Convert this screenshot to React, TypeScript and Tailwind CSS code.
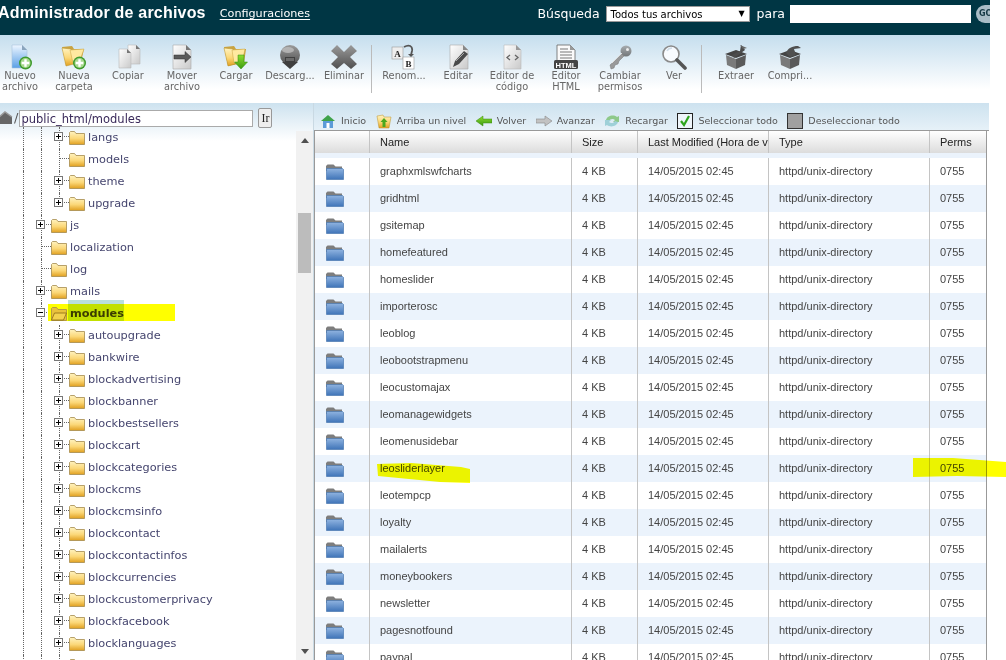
import React from "react";

const dv = "font-['DejaVu_Sans',sans-serif]";
const ar = "font-['Liberation_Sans',Arial,sans-serif]";

function Defs() {
  return (
    <svg width="0" height="0" className="absolute">
      <defs>
        <linearGradient id="fy" x1="0" y1="0" x2="0" y2="1">
          <stop offset="0" stopColor="#fff3c0" />
          <stop offset="0.55" stopColor="#fbd777" />
          <stop offset="1" stopColor="#e0a020" />
        </linearGradient>
        <linearGradient id="fb" x1="0" y1="0" x2="0" y2="1">
          <stop offset="0" stopColor="#8fb3e0" />
          <stop offset="1" stopColor="#3f74b8" />
        </linearGradient>
        <linearGradient id="doc" x1="0" y1="0" x2="1" y2="1">
          <stop offset="0" stopColor="#ffffff" />
          <stop offset="1" stopColor="#c9c9c9" />
        </linearGradient>
        <linearGradient id="docb" x1="0" y1="0" x2="0" y2="1">
          <stop offset="0" stopColor="#eef6ff" />
          <stop offset="1" stopColor="#5aa0e6" />
        </linearGradient>
        <linearGradient id="gr" x1="0" y1="0" x2="0" y2="1">
          <stop offset="0" stopColor="#9a9a9a" />
          <stop offset="1" stopColor="#4f4f4f" />
        </linearGradient>
        <linearGradient id="grn" x1="0" y1="0" x2="0" y2="1">
          <stop offset="0" stopColor="#8fdc30" />
          <stop offset="1" stopColor="#3a9a10" />
        </linearGradient>
      </defs>
    </svg>
  );
}

const Plus = () => (
  <g>
    <circle cx="18.5" cy="19" r="6.5" fill="#3f9a2c" />
    <circle cx="18.5" cy="19" r="5" fill="#a6d98e" />
    <path d="M18.5 15.2v7.6M14.7 19h7.6" stroke="#fff" strokeWidth="2.4" />
  </g>
);

const I = ({ children }: { children: React.ReactNode }) => (
  <svg width="26" height="26" viewBox="0 0 26 26" className="shrink-0">
    {children}
  </svg>
);

const icons: Record<string, React.ReactNode> = {
  newfile: (
    <I>
      <path d="M5 1h10l5 5v18H5z" fill="url(#docb)" stroke="#a9c4dd" strokeWidth="0.6" />
      <path d="M15 1l5 5h-5z" fill="#8aa4bc" />
      <Plus />
    </I>
  ),
  newfolder: (
    <I>
      <path d="M1 3l10-1 2 3 10 0-3 13-15 3z" fill="#c9a340" />
      <path d="M1 4l9 1 3 15-8 2z" fill="url(#fy)" stroke="#b8902c" strokeWidth="0.5" />
      <path d="M9 6l14-1-5 14H12z" fill="#ffe9a0" stroke="#c9a340" strokeWidth="0.5" />
      <Plus />
    </I>
  ),
  copy: (
    <I>
      <path d="M13 1h8l4 4v15H13z" fill="url(#doc)" stroke="#bbb" strokeWidth="0.6" />
      <path d="M21 1l4 4h-4z" fill="#777" />
      <path d="M4 5h8l4 4v15H4z" fill="url(#doc)" stroke="#bbb" strokeWidth="0.6" />
      <path d="M12 5l4 4h-4z" fill="#777" />
    </I>
  ),
  move: (
    <I>
      <path d="M4 1h13l5 5v19H4z" fill="url(#doc)" stroke="#aaa" strokeWidth="0.6" />
      <path d="M17 1l5 5h-5z" fill="#777" />
      <path d="M5 11h11V7.5l6 5.5-6 5.500V15H5z" fill="#5a5a5a" stroke="#333" strokeWidth="0.5" />
    </I>
  ),
  upload: (
    <I>
      <path d="M1 3l10-1 2 3 10 0-2 14-16 3z" fill="#c9a340" />
      <path d="M1 4l9 1 2 15-7 2z" fill="url(#fy)" stroke="#b8902c" strokeWidth="0.5" />
      <path d="M9 6l13-1-3 14H11z" fill="#ffe9a0" stroke="#c9a340" strokeWidth="0.5" />
      <path d="M15 11h6v7h3.500L18 25l-6.500-7H15z" fill="url(#grn)" stroke="#2f8a10" strokeWidth="0.5" />
    </I>
  ),
  download: (
    <I>
      <circle cx="13" cy="11" r="10" fill="url(#gr)" />
      <ellipse cx="11" cy="6" rx="6" ry="3" fill="#c4c4c4" opacity="0.7" />
      <path d="M8 13h10v5h3l-8 7-8-7h3z" fill="#3f3f3f" />
      <path d="M9 14h8v3H9z" fill="#6a6a6a" />
    </I>
  ),
  del: (
    <I>
      <path d="M6 1l7 7 7-7 6 6-7 6 7 7-6 5-7-6-7 6-6-5 7-7-7-6z" fill="url(#gr)" />
    </I>
  ),
  rename: (
    <I>
      <rect x="1" y="3" width="11" height="12" fill="#eee" stroke="#999" strokeWidth="0.6" />
      <text x="6.500" y="12.500" textAnchor="middle" fontSize="9" fontWeight="700" fontFamily="'Liberation Serif',serif" fill="#222">A</text>
      <rect x="12" y="13" width="11" height="12" fill="#fff" stroke="#999" strokeWidth="0.6" />
      <text x="17.500" y="22.500" textAnchor="middle" fontSize="9" fontWeight="700" fontFamily="'Liberation Serif',serif" fill="#222">B</text>
      <path d="M13 3c5-3 9-1 8 4l-1 4" fill="none" stroke="#555" strokeWidth="1.800" />
      <path d="M17 10l3 3 3-3z" fill="#555" />
    </I>
  ),
  edit: (
    <I>
      <path d="M5 1h13l5 5v19H5z" fill="url(#doc)" stroke="#aaa" strokeWidth="0.6" />
      <path d="M18 1l5 5h-5z" fill="#888" />
      <path d="M8 23l2-6L19 7l4 3-9 10z" fill="#4a4a4a" />
      <path d="M11 17l8-8" stroke="#aaa" strokeWidth="1" />
    </I>
  ),
  code: (
    <I>
      <path d="M5 1h12l5 5v19H5z" fill="url(#doc)" stroke="#bbb" strokeWidth="0.6" />
      <path d="M17 1l5 5h-5z" fill="#999" />
      <path d="M11 11l-3 2.500 3 2.500M16 11l3 2.500-3 2.500" fill="none" stroke="#666" strokeWidth="1.300" />
    </I>
  ),
  html: (
    <I>
      <path d="M4 1h13l5 5v13H4z" fill="#fafafa" stroke="#666" strokeWidth="0.8" />
      <path d="M17 1l5 5h-5z" fill="#999" />
      <path d="M7 5h8M7 8h12M7 11h12M7 14h12" stroke="#777" strokeWidth="1" />
      <rect x="1" y="16" width="24" height="9" rx="1.500" fill="#444" />
      <text x="13" y="23.500" textAnchor="middle" fontSize="7.500" fontWeight="700" fontFamily="'Liberation Sans',sans-serif" fill="#fff">HTML</text>
    </I>
  ),
  key: (
    <I>
      <circle cx="19" cy="7" r="5.500" fill="url(#gr)" opacity="0.75" />
      <circle cx="20.500" cy="5.500" r="1.500" fill="#eee" />
      <path d="M15 10L3 21l1 4 3-1 1-3 3-1 1-3 5-5z" fill="#999" stroke="#777" strokeWidth="0.5" />
      <path d="M15 9L5 19" stroke="#ddd" strokeWidth="1" />
    </I>
  ),
  view: (
    <I>
      <circle cx="10" cy="10" r="8" fill="#f8fbff" stroke="#8a8a8a" strokeWidth="1.600" />
      <path d="M6 7c1-2 3-3 5-3" stroke="#cfdde8" strokeWidth="1.500" fill="none" />
      <path d="M16 16l8 8" stroke="#555" strokeWidth="3.600" strokeLinecap="round" />
    </I>
  ),
  extract: (
    <I>
      <path d="M2 10l11-4 11 4-11 4z" fill="#444" />
      <path d="M3 11l10 4v10L4 21z" fill="#7a7a7a" />
      <path d="M23 11l-10 4v10l9-4z" fill="#5a5a5a" />
      <path d="M9 11l2 3 11-8-2-3-2-2-1 6z" fill="#4c4c4c" />
      <path d="M17 1l7 3-4 1z" fill="#666" />
    </I>
  ),
  compress: (
    <I>
      <path d="M2 10l11-4 11 4-11 4z" fill="#444" />
      <path d="M3 11l10 4v10L4 21z" fill="#7a7a7a" />
      <path d="M23 11l-10 4v10l9-4z" fill="#5a5a5a" />
      <path d="M9 9c2-5 6-7 12-7l3 2-7 1 2 6-6 2z" fill="#505050" />
    </I>
  ),
};

const ToolItem = ({ icon, label }: { icon: string; label: string[] }) => (
  <div className="flex w-[54px] shrink-0 flex-col items-center">
    {icons[icon]}
    <div className={`text-center text-[9.800px] leading-[11px] whitespace-nowrap text-[#666] ${dv}`}>
      {label.map((l) => (
        <div key={l}>{l}</div>
      ))}
    </div>
  </div>
);

const Sep = () => <div className="mt-[1px] h-[48px] w-px shrink-0 bg-[#bbb]" />;

const Folder = ({ open }: { open?: boolean }) => (
  <svg width="16" height="14" viewBox="0 0 16 14" className="shrink-0">
    <path d="M.5 3V1.500L1.500.5h4l1.500 2h8.500v11H.5z" fill={open ? "#e9c23c" : "url(#fy)"} stroke="#a58a4c" strokeWidth="0.8" />
    {open && <path d="M.5 13l3-7h12l-3 7z" fill="#f3d24e" stroke="#8a6a10" strokeWidth="0.8" />}
  </svg>
);

const Expander = ({ minus }: { minus?: boolean }) => (
  <span className="absolute left-[-5px] top-[5px] flex h-[9px] w-[9px] items-center justify-center border border-[#777] bg-white">
    <svg width="7" height="7" viewBox="0 0 7 7">
      <path d={minus ? "M1 3.500h5" : "M1 3.500h5M3.500 1v5"} stroke="#000" strokeWidth="1" />
    </svg>
  </span>
);

const Guide = () => <div className="h-full w-[18px] shrink-0 border-l border-dotted border-[#666]" />;

type TreeRow = { name: string; level: 1 | 2; plus?: boolean; open?: boolean; last?: boolean };

const TreeLine = ({ name, level, plus, open, last }: TreeRow) => (
  <div className="flex h-[22px] shrink-0 pl-[23px]">
    <Guide />
    {level === 2 && <Guide />}
    <div className="relative h-full w-[10px] shrink-0">
      <div className={`absolute left-0 top-0 border-l border-dotted border-[#666] ${last ? "h-[10px]" : "h-full"}`} />
      <div className="absolute left-0 top-[9px] w-[10px] border-t border-dotted border-[#666]" />
      {(plus || open) && <Expander minus={open} />}
    </div>
    <div className="relative flex items-center">
      {open && (
        <>
          <div className="absolute left-[-3px] top-[1px] h-[17px] w-[127px] bg-[#ffff00]" />
          <div className="absolute left-[17px] top-[-3px] h-[4px] w-[56px] bg-[#b9dfdd]" />
          <div className="absolute left-[17px] top-[1px] h-[17px] w-[56px] bg-[#c2e000]" />
        </>
      )}
      <span className="relative">
        <Folder open={open} />
      </span>
      {name && (
        <span className={`relative ml-[3px] text-[11.300px] ${open ? "font-bold text-[#3b3b00]" : "text-[#45456e]"} ${dv}`}>{name}</span>
      )}
    </div>
  </div>
);

const tree: TreeRow[] = [
  { name: "langs", level: 2, plus: true },
  { name: "models", level: 2 },
  { name: "theme", level: 2, plus: true },
  { name: "upgrade", level: 2, plus: true, last: true },
  { name: "js", level: 1, plus: true },
  { name: "localization", level: 1 },
  { name: "log", level: 1 },
  { name: "mails", level: 1, plus: true },
  { name: "modules", level: 1, open: true },
  ...[
    "autoupgrade",
    "bankwire",
    "blockadvertising",
    "blockbanner",
    "blockbestsellers",
    "blockcart",
    "blockcategories",
    "blockcms",
    "blockcmsinfo",
    "blockcontact",
    "blockcontactinfos",
    "blockcurrencies",
    "blockcustomerprivacy",
    "blockfacebook",
    "blocklanguages",
    "",
  ].map((name) => ({ name, level: 2 as const, plus: true })),
];

const files = [
  "graphxmlswfcharts",
  "gridhtml",
  "gsitemap",
  "homefeatured",
  "homeslider",
  "importerosc",
  "leoblog",
  "leobootstrapmenu",
  "leocustomajax",
  "leomanagewidgets",
  "leomenusidebar",
  "leosliderlayer",
  "leotempcp",
  "loyalty",
  "mailalerts",
  "moneybookers",
  "newsletter",
  "pagesnotfound",
  "paypal",
];

const BlueFolder = () => (
  <svg width="18" height="16" viewBox="0 0 18 16">
    <path d="M0 2L1.500.5h6l2 2h6.500V7H0z" fill="#7d7d7d" />
    <path d="M.5 4.500h16l1 1V15.500H.5z" fill="url(#fb)" stroke="#4a78b0" strokeWidth="0.7" />
  </svg>
);

const colW = ["w-[55px]", "w-[202px]", "w-[66px]", "w-[131px]", "w-[161px]", "w-[57px]"];

const Cell = ({ w, children, className = "" }: { w: string; children?: React.ReactNode; className?: string }) => (
  <div className={`${w} flex h-full shrink-0 items-center overflow-hidden whitespace-nowrap border-r border-[#c4c4c4] pl-[10px] ${className}`}>
    {children}
  </div>
);

const NavItem = ({ icon, label }: { icon: React.ReactNode; label: string }) => (
  <div className="flex items-center gap-[5px]">
    {icon}
    <span className={`text-[9.500px] whitespace-nowrap text-[#555] ${dv}`}>{label}</span>
  </div>
);

const N = ({ children }: { children: React.ReactNode }) => (
  <svg width="16" height="16" viewBox="0 0 16 16" className="shrink-0">
    {children}
  </svg>
);

export default function App() {
  return (
    <div className="relative h-[660px] w-[1006px] overflow-hidden bg-white">
      <Defs />
      {/* header */}
      <div className="flex h-[35px] w-[990px] items-start bg-[#003644] text-white">
        <div className={`ml-[-2px] mt-[1px] text-[16px] font-bold tracking-[0.2px] whitespace-nowrap ${ar}`}>Administrador de archivos</div>
        <div className={`ml-[14px] mt-[6px] text-[11.200px] underline underline-offset-2 ${dv}`}>Configuraciones</div>
        <div className="ml-auto mt-[5px] flex items-center">
          <span className={`text-[12.500px] ${dv}`}>Búsqueda</span>
          <div className={`ml-[6px] flex h-[16px] w-[144px] items-center justify-between border border-[#999] bg-white px-[4px] text-[10px] text-black ${dv}`}>
            <span>Todos tus archivos</span>
            <span className="text-[8px]">▼</span>
          </div>
          <span className={`ml-[7px] text-[12.500px] ${dv}`}>para</span>
          <div className="ml-[5px] h-[18px] w-[181px] bg-white" />
          <div className={`ml-[5px] flex h-[18px] w-[14px] items-center overflow-hidden rounded-l-full bg-[#a9bcc6] pl-[3px] text-[8px] font-bold text-[#143844] ${dv}`}>GO</div>
        </div>
      </div>

      {/* toolbar */}
      <div className="flex h-[68px] w-[990px] bg-[linear-gradient(#c5deee,#ffffff_80%)] pt-[9px]">
        <div className="ml-[-7px] flex">
          <ToolItem icon="newfile" label={["Nuevo", "archivo"]} />
          <ToolItem icon="newfolder" label={["Nueva", "carpeta"]} />
          <ToolItem icon="copy" label={["Copiar"]} />
          <ToolItem icon="move" label={["Mover", "archivo"]} />
          <ToolItem icon="upload" label={["Cargar"]} />
          <ToolItem icon="download" label={["Descarg..."]} />
          <ToolItem icon="del" label={["Eliminar"]} />
        </div>
        <Sep />
        <div className="ml-[5px] flex">
          <ToolItem icon="rename" label={["Renom..."]} />
          <ToolItem icon="edit" label={["Editar"]} />
          <ToolItem icon="code" label={["Editor de", "código"]} />
          <ToolItem icon="html" label={["Editor", "HTML"]} />
          <ToolItem icon="key" label={["Cambiar", "permisos"]} />
          <ToolItem icon="view" label={["Ver"]} />
        </div>
        <Sep />
        <div className="ml-[7px] flex">
          <ToolItem icon="extract" label={["Extraer"]} />
          <ToolItem icon="compress" label={["Compri..."]} />
        </div>
      </div>

      {/* body */}
      <div className="flex h-[557px] w-[1006px]">
        {/* left panel */}
        <div className="flex h-full w-[314px] shrink-0 flex-col border-r border-[#c9d9e3] bg-[linear-gradient(#cde2ef,#ffffff_38px)]">
          <div className="flex h-[25px] shrink-0 items-start pt-[7px]">
            <svg width="14" height="14" viewBox="0 0 14 14" className="shrink-0">
              <path d="M-1 7l6-5 7 5v7H0z" fill="#666" />
              <path d="M-1 7l6-5 7 5" fill="none" stroke="#999" strokeWidth="1.500" />
            </svg>
            <span className={`text-[13px] leading-[16px] text-[#555] ${dv}`}>/</span>
            <div className={`ml-px flex h-[17px] w-[234px] shrink-0 items-center border border-[#aaa] bg-white pl-[1px] pt-[2px] text-[11.500px] text-[#3a2a5a] ${dv}`}>public_html/modules</div>
            <div className="ml-[5px] mt-[-2px] flex h-[20px] w-[14px] items-center justify-center rounded-[2px] border border-[#999] bg-[#eeeeee] font-['Liberation_Serif',serif] text-[12px] text-[#222]">Ir</div>
          </div>
          <div className="mt-[-1px] flex min-h-0 flex-1">
            <div className="flex w-[296px] shrink-0 flex-col overflow-hidden">
              {tree.map((r) => (
                <TreeLine key={r.name} {...r} />
              ))}
            </div>
            <div className="mt-[4px] flex w-[17px] shrink-0 flex-col items-center bg-[#f1f1f1]">
              <svg width="8" height="5" viewBox="0 0 8 5" className="mt-[7px]">
                <path d="M4 0l4 5H0z" fill="#505050" />
              </svg>
              <div className="mt-[70px] h-[60px] w-[13px] bg-[#bcbcbc]" />
              <div className="flex-1" />
              <svg width="8" height="5" viewBox="0 0 8 5" className="mb-[6px]">
                <path d="M4 5l4-5H0z" fill="#505050" />
              </svg>
            </div>
          </div>
        </div>

        {/* right panel */}
        <div className="flex h-full min-w-0 flex-1 flex-col">
          <div className="flex h-[28px] w-[675px] shrink-0 items-center gap-[9.500px] border-b border-[#999] bg-[linear-gradient(#cde2ef,#e6f1f8)] pl-[6px] pt-[9px]">
            <NavItem
              label="Inicio"
              icon={
                <N>
                  <path d="M3 8h10v7H3z" fill="#5b9bd8" />
                  <path d="M1 8l7-6 7 6z" fill="#3fa34a" />
                  <rect x="6.500" y="10" width="3" height="5" fill="#fff" />
                </N>
              }
            />
            <NavItem
              label="Arriba un nivel"
              icon={
                <N>
                  <path d="M1 3l6-1 1 2h7l-2 11H3z" fill="url(#fy)" stroke="#b8902c" strokeWidth="0.5" />
                  <path d="M8 5l3.500 4H9.500v5h-3V9H4.500z" fill="#4aa81e" />
                </N>
              }
            />
            <NavItem
              label="Volver"
              icon={
                <N>
                  <path d="M0 8l7-5v3h9v4H7v3z" fill="url(#grn)" stroke="#3a8a10" strokeWidth="0.5" />
                </N>
              }
            />
            <NavItem
              label="Avanzar"
              icon={
                <N>
                  <path d="M16 8L9 3v3H0v4h9v3z" fill="#c2c2c2" stroke="#888" strokeWidth="0.6" />
                </N>
              }
            />
            <NavItem
              label="Recargar"
              icon={
                <N>
                  <path d="M2 7c1-4 7-6 11-3l2-1v6h-6l2-2C9 5 6 6 5 8z" fill="#8ec98a" />
                  <path d="M14 9c-1 4-7 6-11 3l-2 1V7h6L5 9c2 2 5 1 6-1z" fill="#9ed0d8" />
                </N>
              }
            />
            <NavItem
              label="Seleccionar todo"
              icon={
                <N>
                  <rect x="0.500" y="0.500" width="15" height="15" fill="#eef5fa" stroke="#222" />
                  <path d="M4 8l3 4 5-9" fill="none" stroke="#2fa51e" strokeWidth="2.200" />
                </N>
              }
            />
            <NavItem
              label="Deseleccionar todo"
              icon={
                <N>
                  <rect x="0.500" y="0.500" width="15" height="15" fill="#a0a0a0" stroke="#333" />
                </N>
              }
            />
          </div>
          <div className="flex min-h-0 w-[673px] flex-1 flex-col overflow-hidden border-x border-[#999]">
            <div className={`flex h-[22px] shrink-0 bg-[linear-gradient(#ffffff,#dcdcdc)] text-[11px] text-[#222] ${ar}`}>
              <Cell w={colW[0]} />
              <Cell w={colW[1]}>Name</Cell>
              <Cell w={colW[2]}>Size</Cell>
              <Cell w={colW[3]}>Last Modified (Hora de verano)</Cell>
              <Cell w={colW[4]}>Type</Cell>
              <Cell w={colW[5]} className="border-r-0">Perms</Cell>
            </div>
            <div className="h-[5px] shrink-0 bg-[#ebf3fc]" />
            {files.map((f, i) => (
              <div key={f} className={`flex h-[27px] shrink-0 text-[11px] text-[#444] ${ar} ${i % 2 ? "bg-[#ebf3fc]" : "bg-white"}`}>
                <Cell w={colW[0]} className="pl-[11px]">
                  <BlueFolder />
                </Cell>
                <Cell w={colW[1]}>{f}</Cell>
                <Cell w={colW[2]}>4 KB</Cell>
                <Cell w={colW[3]}>14/05/2015 02:45</Cell>
                <Cell w={colW[4]}>httpd/unix-directory</Cell>
                <Cell w={colW[5]} className="border-r-0">0755</Cell>
              </div>
            ))}
          </div>
          {/* hand-drawn marker strokes lying over the table */}
          <svg width="98" height="24" viewBox="0 0 98 24" className="absolute left-[375px] top-[461px] mix-blend-multiply">
            <path d="M2 3l34-1 50 4 9 2 0 14-30-1L3 15z" fill="#ffff00" />
          </svg>
          <svg width="95" height="24" viewBox="0 0 95 24" className="absolute left-[912px] top-[455px] mix-blend-multiply">
            <path d="M1 3l40 0 54 4v15l-50-1-44 1z" fill="#ffff00" />
          </svg>
        </div>
      </div>
    </div>
  );
}
